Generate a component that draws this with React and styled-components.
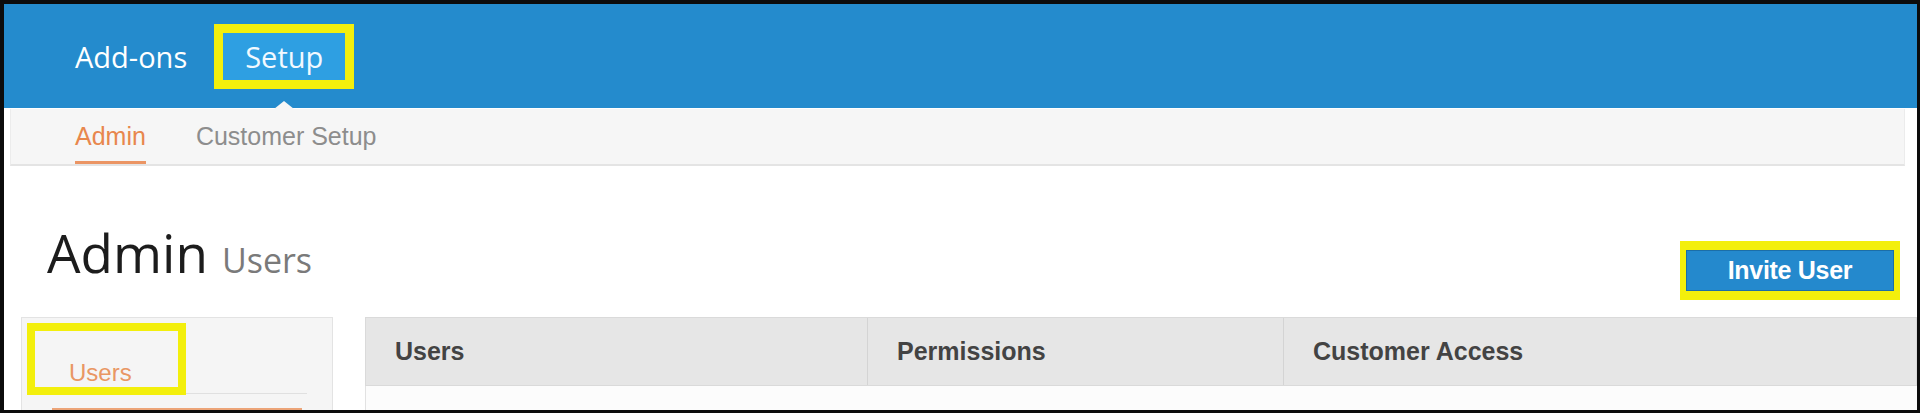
import React from 'react';
import styled, { createGlobalStyle } from 'styled-components';

const Global = createGlobalStyle`
  html, body { margin: 0; padding: 0; background: #0c0c0c; }
  body { width: 1920px; height: 413px; overflow: hidden; }
  #root { height: 413px; }
`;

const YELLOW = '#f3ef0c';
const ORANGE = '#e8874d';

const Frame = styled.div`
  height: 413px;
  box-sizing: border-box;
  padding: 4px 3px 3px 4px;
  background: #0c0c0c;
`;

const Screen = styled.div`
  height: 100%;
  background: #fff;
  overflow: hidden;
  display: flex;
  flex-direction: column;
`;

const TopBar = styled.header`
  flex: none;
  height: 104px;
  background: #248bcd;
  display: flex;
  align-items: center;
  gap: 27px;
  padding-left: 71px;
  font-family: "Open Sans", sans-serif;
`;

const NavLink = styled.span`
  font-size: 29px;
  line-height: 1;
  color: #fff;
`;

const NavActive = styled.span`
  position: relative;
  border: 9px solid ${YELLOW};
  background: #2e9fe2;
  padding: 9px 22px 9px;
  font-size: 29px;
  line-height: 1;
  color: #f2f9ff;
  &::after {
    content: '';
    position: absolute;
    left: 50%;
    top: calc(100% + 21px);
    transform: translateX(-50%);
    border-left: 10px solid transparent;
    border-right: 10px solid transparent;
    border-bottom: 8px solid #f6f6f6;
  }
`;

const SubNav = styled.nav`
  flex: none;
  height: 57px;
  box-sizing: border-box;
  margin: 1px 12px 0 6px;
  background: #f6f6f6;
  border: 1px solid #ececec;
  border-top: none;
  border-bottom: 2px solid #e4e4e4;
  display: flex;
  gap: 50px;
  padding-left: 64px;
  font-family: "Liberation Sans", Arial, sans-serif;
`;

const SubTab = styled.span`
  display: flex;
  align-items: center;
  padding-top: 3px;
  font-size: 25px;
  color: ${p => (p.$active ? ORANGE : '#8d8d8d')};
  border-bottom: 3px solid ${p => (p.$active ? '#eb9564' : 'transparent')};
`;

const HeadingRow = styled.div`
  flex: none;
  margin-top: 57px;
  display: flex;
  justify-content: space-between;
  align-items: flex-start;
  padding: 0 17px 0 43px;
`;

const Title = styled.h1`
  margin: 0;
  display: flex;
  align-items: baseline;
  gap: 14px;
  font-family: "Open Sans", sans-serif;
  font-weight: 400;
  font-size: 53px;
  line-height: 60px;
  color: #1c1c1c;
`;

const TitleSub = styled.span`
  font-size: 34px;
  color: #7a7a7a;
`;

const ButtonMark = styled.div`
  margin-top: 18px;
  border: 9px solid ${YELLOW};
  border-left-width: 6px;
  border-right-width: 6px;
`;

const PrimaryButton = styled.button`
  display: block;
  width: 208px;
  height: 41px;
  margin: 0;
  background: #2489cd;
  border: 1px solid #1b6ea8;
  color: #fff;
  font-family: "Liberation Sans", Arial, sans-serif;
  font-weight: 700;
  font-size: 25px;
  letter-spacing: -0.3px;
  cursor: pointer;
`;

const BodyRow = styled.div`
  flex: 1;
  margin-top: 17px;
  display: flex;
  align-items: flex-start;
  gap: 32px;
  padding-left: 17px;
`;

const SideCard = styled.aside`
  position: relative;
  flex: none;
  width: 312px;
  min-height: 140px;
  box-sizing: border-box;
  padding-top: 6px;
  background: #f5f5f5;
  border: 1px solid #e3e3e3;
  font-family: "Liberation Sans", Arial, sans-serif;
`;

const SideItem = styled.div`
  height: 63px;
  margin: 0 25px 0 15px;
  padding: 0 0 6px 32px;
  display: flex;
  align-items: flex-end;
  border-bottom: 1px solid #e0e0e0;
  font-size: 24px;
  color: #e99764;
`;

const SideNext = styled.div`
  height: 30px;
  margin: 14px 30px 0 30px;
  border-top: 4px solid #eca478;
`;

const Annotation = styled.div`
  position: absolute;
  top: 5px;
  left: 5px;
  width: 159px;
  height: 72px;
  box-sizing: border-box;
  border: 8px solid ${YELLOW};
  pointer-events: none;
`;

const Table = styled.div`
  flex: 1;
  font-family: "Liberation Sans", Arial, sans-serif;
`;

const HeadRow = styled.div`
  display: grid;
  grid-template-columns: 501px 416px 1fr;
  height: 69px;
  box-sizing: border-box;
  background: #e6e6e6;
  border: 1px solid #dadada;
`;

const HeadCell = styled.div`
  display: flex;
  align-items: center;
  padding-left: 29px;
  font-size: 25px;
  font-weight: 700;
  color: #434343;
  border-left: ${p => (p.$first ? 'none' : '1px solid #d4d4d4')};
`;

const BodyRowLine = styled.div`
  height: 40px;
  background: #fcfcfc;
  border-left: 1px solid #e2e2e2;
`;

export default function App() {
  return (
    <Frame>
      <Global />
      <Screen>
        <TopBar>
          <NavLink>Add-ons</NavLink>
          <NavActive>Setup</NavActive>
        </TopBar>
        <SubNav>
          <SubTab $active>Admin</SubTab>
          <SubTab>Customer Setup</SubTab>
        </SubNav>
        <HeadingRow>
          <Title>
            Admin <TitleSub>Users</TitleSub>
          </Title>
          <ButtonMark>
            <PrimaryButton>Invite User</PrimaryButton>
          </ButtonMark>
        </HeadingRow>
        <BodyRow>
          <SideCard>
            <SideItem>Users</SideItem>
            <SideNext />
            <Annotation />
          </SideCard>
          <Table>
            <HeadRow>
              <HeadCell $first>Users</HeadCell>
              <HeadCell>Permissions</HeadCell>
              <HeadCell>Customer Access</HeadCell>
            </HeadRow>
            <BodyRowLine />
          </Table>
        </BodyRow>
      </Screen>
    </Frame>
  );
}
